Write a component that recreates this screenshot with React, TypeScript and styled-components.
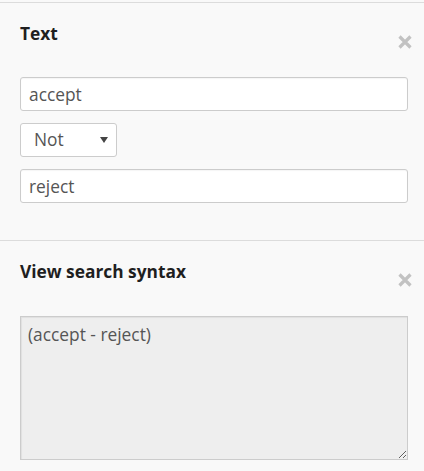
import React from "react";
import styled, { createGlobalStyle } from "styled-components";

const Global = createGlobalStyle`
  html, body { margin: 0; padding: 0; background: #f9f9f9; }
  body { font-family: "Open Sans", "Noto Sans", sans-serif; color: #333; }
  * { box-sizing: border-box; }
`;

const Page = styled.div`
  padding-top: 2px;
  background: #f9f9f9;
`;

const Section = styled.section<{ $bottom: number }>`
  border-top: 1px solid #dcdcdc;
  padding: 18px 16px ${(p) => p.$bottom}px 20px;
  display: flex;
  flex-direction: column;
`;

const Header = styled.div<{ $gap: number }>`
  display: flex;
  justify-content: space-between;
  align-items: flex-start;
  height: 24px;
  margin-bottom: ${(p) => p.$gap}px;
`;

const Title = styled.h3`
  margin: 0;
  font-size: 13pt;
  line-height: 24px;
  font-weight: 700;
  color: #1f1f1f;
`;

const Close = styled.button`
  border: 0;
  background: transparent;
  padding: 0;
  margin: 14px -4px 0 0;
  width: 14px;
  height: 14px;
  display: flex;
  flex-shrink: 0;
  cursor: pointer;
  color: #c2c2c2;
`;

const Fields = styled.div`
  display: flex;
  flex-direction: column;
  gap: 12px;
  align-items: flex-start;
`;

const Input = styled.input`
  width: 100%;
  height: 34px;
  padding: 0 8px;
  border: 1px solid #cccccc;
  border-radius: 3px;
  background: #fff;
  font: 400 13pt/1 "Open Sans", "Noto Sans", sans-serif;
  color: #555;
  box-shadow: inset 0 1px 1px rgba(0, 0, 0, 0.04);
  outline: none;
`;

const SelectWrap = styled.div`
  position: relative;
  width: 97px;
  height: 34px;
`;

const Select = styled.select`
  appearance: none;
  -webkit-appearance: none;
  width: 100%;
  height: 100%;
  padding: 0 24px 0 13px;
  border: 1px solid #cccccc;
  border-radius: 3px;
  background: #fff;
  font: 400 13pt/1 "Open Sans", "Noto Sans", sans-serif;
  color: #555;
  outline: none;
`;

const Caret = styled.svg`
  position: absolute;
  left: 80px;
  top: 14px;
  width: 8px;
  height: 6px;
  pointer-events: none;
`;

const Syntax = styled.textarea`
  width: 100%;
  height: 144px;
  padding: 5px 7px;
  border: 1px solid #cccccc;
  border-radius: 0;
  background: #eeeeee;
  font: 400 13pt/24px "Open Sans", "Noto Sans", sans-serif;
  color: #555;
  box-shadow: inset 1px 1px 1px rgba(0, 0, 0, 0.06);
  outline: none;
`;

const CloseIcon = () => (
  <svg width="14" height="14" viewBox="0 0 14 14">
    <path d="M1.5 1.5 L12.5 12.5 M12.5 1.5 L1.5 12.5" stroke="currentColor" strokeWidth="3.2" strokeLinecap="butt" />
  </svg>
);

export default function App() {
  return (
    <>
      <Global />
      <Page>
        <Section $bottom={37}>
          <Header $gap={32}>
            <Title>Text</Title>
            <Close aria-label="close"><CloseIcon /></Close>
          </Header>
          <Fields>
            <Input defaultValue="accept" />
            <SelectWrap>
              <Select defaultValue="not">
                <option value="and">And</option>
                <option value="or">Or</option>
                <option value="not">Not</option>
              </Select>
              <Caret viewBox="0 0 8 6">
                <path d="M0 0 H8 L4 6 Z" fill="#444" />
              </Caret>
            </SelectWrap>
            <Input defaultValue="reject" />
          </Fields>
        </Section>
        <Section $bottom={11}>
          <Header $gap={33}>
            <Title>View search syntax</Title>
            <Close aria-label="close"><CloseIcon /></Close>
          </Header>
          <Syntax readOnly value="(accept - reject)" />
        </Section>
      </Page>
    </>
  );
}
